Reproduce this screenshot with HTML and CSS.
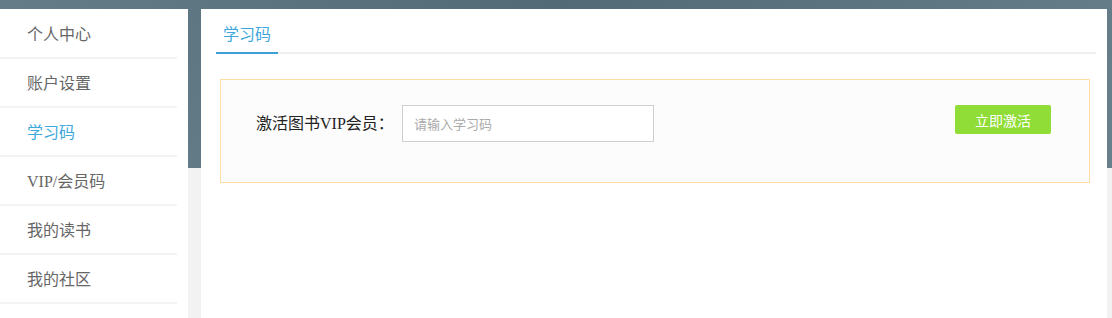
FILE: index.html
```html
<!DOCTYPE html>
<html lang="zh-CN">
<head>
    <meta charset="UTF-8">
    <title>学习码</title>
    <link rel="stylesheet" href="styles.css">
</head>
<body>
    <div class="page">
        <ul class="side-menu">
            <li class="menu-item">个人中心</li>
            <li class="menu-item">账户设置</li>
            <li class="menu-item active">学习码</li>
            <li class="menu-item">VIP/会员码</li>
            <li class="menu-item">我的读书</li>
            <li class="menu-item">我的社区</li>
        </ul>
        <div class="main-panel">
            <div class="tab-bar">
                <span class="tab current">学习码</span>
            </div>
            <div class="activate-box">
                <span class="activate-label">激活图书VIP会员：</span>
                <input type="text" class="code-input" placeholder="请输入学习码">
                <button type="button" class="activate-btn">立即激活</button>
            </div>
        </div>
    </div>
</body>
</html>
```

FILE: styles.css
```css
body {
    margin: 0;
    height: 318px;
    overflow: hidden;
    font-family: "Liberation Serif", "Noto Sans CJK SC", serif;
    background:
        linear-gradient(90deg, rgba(255,255,255,0.08), rgba(0,0,0,0.06) 50%, rgba(255,255,255,0.08)) 0 0 / 100% 168px no-repeat,
        linear-gradient(#56717d, #5b7682) 0 0 / 100% 168px no-repeat,
        #f2f2f2;
}
.page {
    display: flex;
    gap: 13px;
    padding-top: 9px;
    height: 309px;
}
.side-menu {
    list-style: none;
    margin: 0;
    padding: 1px 0 0;
    width: 188px;
    background-color: #fff;
}
.menu-item {
    height: 47px;
    line-height: 49px;
    margin-right: 11px;
    padding-left: 27px;
    border-bottom: 2px solid #f3f3f3;
    font-size: 16px;
    color: #666;
}
.menu-item.active {
    color: #3ea8dc;
}
.main-panel {
    width: 906px;
    background-color: #fff;
}
.tab-bar {
    display: flex;
    margin: 0 11px 0 15px;
    border-bottom: 2px solid #f0f0f0;
}
.tab {
    padding: 11px 7px 2px;
    margin-bottom: -2px;
    line-height: 30px;
    font-size: 16px;
    color: #3ea8dc;
    border-bottom: 2px solid #3d9fd4;
}
.activate-box {
    display: flex;
    align-items: flex-start;
    margin: 25px 17px 0 19px;
    height: 77px;
    padding: 25px 38px 0 35px;
    background-color: #fcfcfc;
    border: 1px solid #fddfa5;
}
.activate-label {
    width: 146px;
    line-height: 37px;
    font-size: 16px;
    color: #222;
}
.code-input {
    box-sizing: border-box;
    width: 252px;
    height: 37px;
    padding: 0 11px;
    border: 1px solid #cfcfcf;
    background-color: #fff;
    font-family: "Noto Sans CJK SC", sans-serif;
    font-size: 13px;
    outline: none;
}
.code-input::placeholder {
    color: #aaa;
}
.activate-btn {
    margin-left: auto;
    width: 96px;
    height: 29px;
    border: none;
    border-radius: 2px;
    background-color: #8fdd36;
    color: #fff;
    font-family: "Noto Sans CJK SC", sans-serif;
    font-size: 14px;
    cursor: pointer;
}
```
